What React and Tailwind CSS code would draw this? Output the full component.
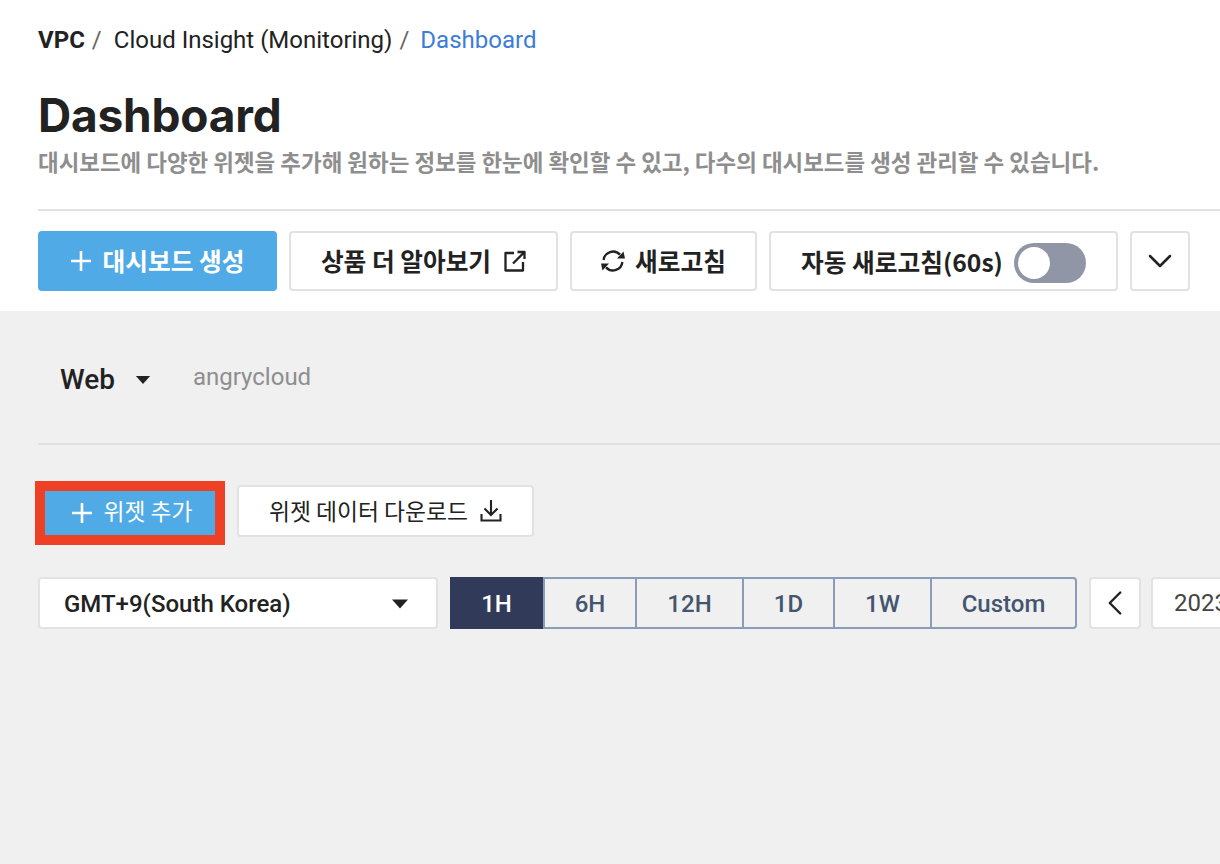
import React from "react";
import { ChevronDown, ChevronLeft } from "lucide-react";

function Caret({ className }) {
  return (
    <svg viewBox="0 0 16 9" className={className} fill="#222222">
      <path d="M0 0h16L8 9z" />
    </svg>
  );
}

function PlusIcon() {
  return (
    <svg viewBox="0 0 20 20" className="w-[20px] h-[20px] shrink-0" fill="none" stroke="currentColor" strokeWidth="2.6">
      <path d="M10 0v20M0 10h20" />
    </svg>
  );
}

function LinkIcon() {
  return (
    <svg viewBox="0 0 22 22" className="w-[22px] h-[22px] shrink-0" fill="none" stroke="#222222" strokeWidth="2.3" strokeLinejoin="round">
      <path d="M10 3H1.5v17.5H19V12" />
      <path d="M9 13.5 20 2.5M13.5 2h7v7" />
    </svg>
  );
}

function RefreshIcon() {
  return (
    <svg viewBox="0 0 24 24" className="w-[24px] h-[24px] shrink-0" fill="none" stroke="#222222" strokeWidth="2.3">
      <path d="M2.6 11A9.5 9.5 0 0 1 19 5.6" />
      <path d="M21.4 13A9.5 9.5 0 0 1 5 18.4" />
      <path d="M16 9.5h8L22.5 2.5z" fill="#222222" stroke="none" />
      <path d="M8 14.5H0l1.5 7z" fill="#222222" stroke="none" />
    </svg>
  );
}

function DownloadIcon() {
  return (
    <svg viewBox="0 0 22 22" className="w-[22px] h-[22px] shrink-0" fill="none" stroke="#222222" strokeWidth="2.1">
      <path d="M1.5 14v6.5h19V14" />
      <path d="M11 0v15" />
      <path d="M4.5 8.5 11 15l6.5-6.5" />
    </svg>
  );
}

function Tab({ children, w }) {
  return (
    <div className={"h-full flex items-center justify-center shrink-0 text-[24px] font-medium text-[#44566f] border-l-2 border-[#8a9db8] pt-[1px] " + w}>
      {children}
    </div>
  );
}

export default function App() {
  return (
    <div className="w-[1220px] h-[864px] overflow-hidden bg-[#f0f0f0] text-[#222222] font-['Roboto','Noto_Sans_CJK_KR',sans-serif]">
      <header className="bg-white h-[311px] pl-[38px] pt-[24px]">
        <nav className="flex items-center h-[32px] text-[24px] leading-[32px] whitespace-nowrap">
          <span className="font-bold">VPC</span>
          <span className="text-[#666666] ml-[7px]">/</span>
          <span className="ml-[12px]">Cloud Insight (Monitoring)</span>
          <span className="text-[#666666] ml-[7px]">/</span>
          <span className="ml-[11px] text-[#3b7dd8]">Dashboard</span>
        </nav>
        <h1 className="mt-[35px] h-[48px] text-[46px] leading-[48px] font-bold font-['Inter','Noto_Sans_CJK_KR',sans-serif] tracking-[-0.2px]">Dashboard</h1>
        <p className="mt-[7px] h-[30px] text-[22.45px] leading-[30px] font-bold text-[#8e8e8e] whitespace-nowrap font-['Noto_Sans_CJK_KR',sans-serif]">
          대시보드에 다양한 위젯을 추가해 원하는 정보를 한눈에 확인할 수 있고, 다수의 대시보드를 생성 관리할 수 있습니다.
        </p>
        <div className="mt-[33px] h-[2px] bg-[#e2e2e2]" />
        <div className="mt-[20px] flex gap-[12px] h-[60px] text-[24.7px] font-bold whitespace-nowrap font-['Noto_Sans_CJK_KR',sans-serif]">
          <button className="w-[239px] rounded-[4px] bg-[#50aae6] text-white flex items-center justify-center gap-[12px]">
            <PlusIcon />
            <span>대시보드 생성</span>
          </button>
          <button className="w-[269px] rounded-[4px] border-2 border-[#e2e2e2] flex items-center justify-center gap-[13px]">
            <span>상품 더 알아보기</span>
            <LinkIcon />
          </button>
          <button className="w-[187px] rounded-[4px] border-2 border-[#e2e2e2] flex items-center justify-center gap-[10px]">
            <RefreshIcon />
            <span>새로고침</span>
          </button>
          <button className="w-[349px] rounded-[4px] border-2 border-[#e2e2e2] flex items-center justify-center gap-[11px] pt-[2px]">
            <span>자동 새로고침(60s)</span>
            <span className="w-[72px] h-[40px] mt-[2px] rounded-full bg-[#9096a5] flex items-center pl-[4px]">
              <span className="w-[32px] h-[32px] rounded-full bg-white" />
            </span>
          </button>
          <button className="w-[60px] rounded-[4px] border-2 border-[#e2e2e2] flex items-center justify-center">
            <ChevronDown size={40} strokeWidth={1.5} />
          </button>
        </div>
      </header>

      <main className="pl-[38px]">
        <div className="h-[134px] border-b-2 border-[#e0e0e0] flex items-start pt-[51px]">
          <span className="ml-[22px] text-[28px] leading-[36px] font-medium">Web</span>
          <Caret className="ml-[20px] mt-[14px] w-[16px] h-[8px]" />
          <span className="ml-[42px] -mt-[2px] text-[24px] leading-[34px] text-[#8e8e8e]">angrycloud</span>
        </div>

        <div className="mt-[41px] flex items-center gap-[12px] h-[54px] whitespace-nowrap">
          <div className="-ml-[3px] w-[190px] h-[64px] shrink-0 border-[10px] border-[#ee4024] bg-[#50aae6] text-white flex items-center justify-center gap-[12px] pl-[4px] text-[22.8px] font-['Noto_Sans_CJK_KR',sans-serif]">
            <PlusIcon />
            <span className="-mt-[3px]">위젯 추가</span>
          </div>
          <button className="self-start -mt-[1px] w-[297px] h-[52px] rounded-[4px] border-2 border-[#e2e2e2] bg-white flex items-center justify-center gap-[12px] text-[22.8px] font-['Noto_Sans_CJK_KR',sans-serif]">
            <span>위젯 데이터 다운로드</span>
            <DownloadIcon />
          </button>
        </div>

        <div className="mt-[37px] flex h-[52px] whitespace-nowrap">
          <div className="w-[400px] shrink-0 rounded-[4px] border-2 border-[#e2e2e2] bg-white flex items-center justify-between pl-[24px] pr-[28px] pt-[1px] text-[24px] font-medium">
            <span>GMT+9(South Korea)</span>
            <Caret className="w-[16px] h-[10px]" />
          </div>
          <div className="ml-[12px] w-[627px] shrink-0 flex rounded-r-[4px] border-y-2 border-r-2 border-[#8a9db8]">
            <div className="-my-[2px] w-[93px] h-[52px] bg-[#323a59] text-white flex items-center justify-center pt-[1px] text-[24px] font-medium">1H</div>
            <Tab w="w-[92px]">6H</Tab>
            <Tab w="w-[107px]">12H</Tab>
            <Tab w="w-[91px]">1D</Tab>
            <Tab w="w-[97px]">1W</Tab>
            <Tab w="w-[145px]">Custom</Tab>
          </div>
          <button className="ml-[12px] w-[52px] shrink-0 rounded-[4px] border-2 border-[#e2e2e2] bg-white flex items-center justify-center">
            <ChevronLeft size={42} strokeWidth={1.4} />
          </button>
          <div className="ml-[10px] w-[200px] shrink-0 rounded-[4px] border-2 border-[#e2e2e2] bg-white flex items-center pl-[21px] text-[24px] text-[#444444]">
            2023
          </div>
        </div>
      </main>
    </div>
  );
}
